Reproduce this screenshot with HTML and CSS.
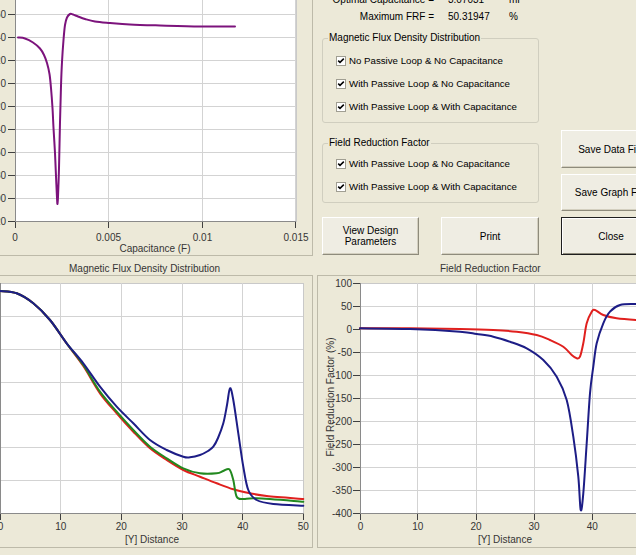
FILE: index.html
```html
<!DOCTYPE html>
<html lang="en">
<head>
    <meta charset="UTF-8">
    <title>Passive Loop Results</title>
    <link rel="stylesheet" href="styles.css">
</head>
<body>
    <div class="window">
        <!-- FRF vs capacitance -->
        <div class="panel panel-top">
            <svg class="chart" width="312" height="255" viewBox="0 0 312 255">
                <rect class="plot" x="15.5" y="-20" width="280.5" height="241.5"/>
                <g class="grid">
                    <line x1="15" y1="14.5" x2="296" y2="14.5"/>
                    <line x1="15" y1="37.5" x2="296" y2="37.5"/>
                    <line x1="15" y1="60.5" x2="296" y2="60.5"/>
                    <line x1="15" y1="83.5" x2="296" y2="83.5"/>
                    <line x1="15" y1="106.5" x2="296" y2="106.5"/>
                    <line x1="15" y1="129.5" x2="296" y2="129.5"/>
                    <line x1="15" y1="152.5" x2="296" y2="152.5"/>
                    <line x1="15" y1="175.5" x2="296" y2="175.5"/>
                    <line x1="15" y1="198.5" x2="296" y2="198.5"/>
                    <line x1="108.5" y1="-20" x2="108.5" y2="222"/>
                    <line x1="202.5" y1="-20" x2="202.5" y2="222"/>
                    <line x1="295.5" y1="-20" x2="295.5" y2="222"/>
                </g>
                <g class="axis">
                    <line x1="15.5" y1="-20" x2="15.5" y2="222"/>
                    <line x1="15" y1="221.5" x2="296" y2="221.5"/>
                </g>
                <g class="ticks">
                    <line x1="8" y1="14.5" x2="15" y2="14.5"/>
                    <line x1="8" y1="37.5" x2="15" y2="37.5"/>
                    <line x1="8" y1="60.5" x2="15" y2="60.5"/>
                    <line x1="8" y1="83.5" x2="15" y2="83.5"/>
                    <line x1="8" y1="106.5" x2="15" y2="106.5"/>
                    <line x1="8" y1="129.5" x2="15" y2="129.5"/>
                    <line x1="8" y1="152.5" x2="15" y2="152.5"/>
                    <line x1="8" y1="175.5" x2="15" y2="175.5"/>
                    <line x1="8" y1="198.5" x2="15" y2="198.5"/>
                    <line x1="8" y1="221.5" x2="15" y2="221.5"/>
                    <line x1="15.5" y1="222" x2="15.5" y2="228"/>
                    <line x1="108.5" y1="222" x2="108.5" y2="228"/>
                    <line x1="202.5" y1="222" x2="202.5" y2="228"/>
                    <line x1="295.5" y1="222" x2="295.5" y2="228"/>
                </g>
                <g class="labels-y">
                    <text x="6" y="18">60</text>
                    <text x="6" y="41">40</text>
                    <text x="6" y="64">20</text>
                    <text x="6" y="87">0</text>
                    <text x="6" y="110">-20</text>
                    <text x="6" y="133">-40</text>
                    <text x="6" y="156">-60</text>
                    <text x="6" y="179">-80</text>
                    <text x="6" y="202">-100</text>
                    <text x="6" y="225">-120</text>
                </g>
                <g class="labels-x">
                    <text x="15" y="241">0</text>
                    <text x="108.5" y="241">0.005</text>
                    <text x="202.5" y="241">0.01</text>
                    <text x="296" y="241">0.015</text>
                    <text x="155" y="252">Capacitance (F)</text>
                </g>
                <polyline class="line line-purple" points="18,37.5 25,38.5 33,42.5 40,48.5 44,55 47,63 49.5,74 51,88 52.5,108 53.5,128 55,153 56,176 57,198 57.5,204 58,197 59,168 60,122 61,86 62,62 63.5,40 65,25 67,17.5 70,14 73,14.5 78,16.5 85,19 95,21.5 110,23 130,24.5 160,25.5 200,26.5 235,26.5"/>
            </svg>
        </div>

        <!-- Results and options -->
        <div class="controls">
            <div class="controls-main">
                <div class="readout">
                    <span class="readout-label">Optimal Capacitance =</span>
                    <span>3.07031</span>
                    <span>mF</span>
                    <span class="readout-label">Maximum FRF =</span>
                    <span>50.31947</span>
                    <span>%</span>
                </div>

                <fieldset class="group group-flux">
                    <legend>Magnetic Flux Density Distribution</legend>
                    <label class="option"><span class="check"><svg width="8" height="8" viewBox="0 0 8 8"><path d="M1.2 3.6 L3 5.4 L6.8 1.6"/></svg></span>No Passive Loop &amp; No Capacitance</label>
                    <label class="option"><span class="check"><svg width="8" height="8" viewBox="0 0 8 8"><path d="M1.2 3.6 L3 5.4 L6.8 1.6"/></svg></span>With Passive Loop &amp; No Capacitance</label>
                    <label class="option"><span class="check"><svg width="8" height="8" viewBox="0 0 8 8"><path d="M1.2 3.6 L3 5.4 L6.8 1.6"/></svg></span>With Passive Loop &amp; With Capacitance</label>
                </fieldset>

                <fieldset class="group group-frf">
                    <legend>Field Reduction Factor</legend>
                    <label class="option"><span class="check"><svg width="8" height="8" viewBox="0 0 8 8"><path d="M1.2 3.6 L3 5.4 L6.8 1.6"/></svg></span>With Passive Loop &amp; No Capacitance</label>
                    <label class="option"><span class="check"><svg width="8" height="8" viewBox="0 0 8 8"><path d="M1.2 3.6 L3 5.4 L6.8 1.6"/></svg></span>With Passive Loop &amp; With Capacitance</label>
                </fieldset>

                <div class="button-row">
                    <button class="btn btn-params">View Design<br>Parameters</button>
                    <button class="btn btn-print">Print</button>
                </div>
            </div>

            <div class="controls-side">
                <button class="btn btn-save">Save Data File</button>
                <button class="btn btn-save btn-save-graph">Save Graph File</button>
                <button class="btn btn-close">Close</button>
            </div>
        </div>

        <div class="chart-title">Magnetic Flux Density Distribution</div>
        <div class="chart-title chart-title-right">Field Reduction Factor</div>

        <!-- Flux density along Y -->
        <div class="panel panel-bottom-left">
            <svg class="chart" width="312" height="271" viewBox="0 0 312 271">
                <g transform="translate(0,-276)">
                    <rect class="plot" x="-5" y="283.5" width="308.5" height="230"/>
                    <g class="grid">
                        <line x1="0" y1="316.5" x2="303" y2="316.5"/>
                        <line x1="0" y1="349.5" x2="303" y2="349.5"/>
                        <line x1="0" y1="382.5" x2="303" y2="382.5"/>
                        <line x1="0" y1="414.5" x2="303" y2="414.5"/>
                        <line x1="0" y1="447.5" x2="303" y2="447.5"/>
                        <line x1="0" y1="480.5" x2="303" y2="480.5"/>
                        <line x1="60.5" y1="283" x2="60.5" y2="513"/>
                        <line x1="121.5" y1="283" x2="121.5" y2="513"/>
                        <line x1="182.5" y1="283" x2="182.5" y2="513"/>
                        <line x1="242.5" y1="283" x2="242.5" y2="513"/>
                    </g>
                    <g class="axis">
                        <line x1="0.5" y1="283" x2="0.5" y2="514"/>
                        <line x1="0" y1="513.5" x2="304" y2="513.5"/>
                    </g>
                    <g class="ticks">
                        <line x1="0.5" y1="514" x2="0.5" y2="520"/>
                        <line x1="60.5" y1="514" x2="60.5" y2="520"/>
                        <line x1="121.5" y1="514" x2="121.5" y2="520"/>
                        <line x1="182.5" y1="514" x2="182.5" y2="520"/>
                        <line x1="242.5" y1="514" x2="242.5" y2="520"/>
                        <line x1="303.5" y1="514" x2="303.5" y2="520"/>
                    </g>
                    <g class="labels-x">
                        <text x="0.5" y="530">0</text>
                        <text x="60.7" y="530">10</text>
                        <text x="121.3" y="530">20</text>
                        <text x="182" y="530">30</text>
                        <text x="242.7" y="530">40</text>
                        <text x="303.3" y="530">50</text>
                        <text x="152" y="543">[Y] Distance</text>
                    </g>
                    <polyline class="line line-red" points="0,291 16.7,293.3 33.3,303.3 50,320 66.7,343.5 83.3,366 100,393.3 116.7,413.3 133.3,431.7 150,448.3 166.7,460 183.3,470 200,476.7 216.7,483.3 233.3,489.3 250,493.3 266.7,496 303.3,499"/>
                    <polyline class="line line-green" points="0,291 16.7,293.3 33.3,303.3 50,320 66.7,343.3 83.3,365 100,391.7 116.7,411.7 133.3,430 150,446.7 166.7,458.3 183.3,468.3 200,473.3 216.7,473.3 223.3,471 229.3,469.3 233.3,480 236.7,496.7 243.3,499 256.7,498.3 303.3,501.7"/>
                    <polyline class="line line-blue" points="0,291 16.7,293.3 33.3,303.3 50,320 66.7,343.3 83.3,363.3 100,386.7 116.7,406.7 133.3,423.3 150,440 166.7,450 183.3,456.7 190,457.3 200,455 208,451 213.3,446.7 218,438 223.3,423.3 227,405 230,388.3 233.3,400 238.3,433.3 243.3,466.7 248.3,490 256.7,500 273.3,504 303.3,505.7"/>
                </g>
            </svg>
        </div>

        <!-- Field reduction factor along Y -->
        <div class="panel panel-bottom-right">
            <svg class="chart" width="318" height="271" viewBox="0 0 318 271">
                <g transform="translate(-318,-276)">
                    <rect class="plot" x="360.5" y="283.5" width="320" height="230"/>
                    <g class="grid">
                        <line x1="360" y1="306.5" x2="680" y2="306.5"/>
                        <line x1="360" y1="329.5" x2="680" y2="329.5"/>
                        <line x1="360" y1="352.5" x2="680" y2="352.5"/>
                        <line x1="360" y1="375.5" x2="680" y2="375.5"/>
                        <line x1="360" y1="398.5" x2="680" y2="398.5"/>
                        <line x1="360" y1="421.5" x2="680" y2="421.5"/>
                        <line x1="360" y1="444.5" x2="680" y2="444.5"/>
                        <line x1="360" y1="467.5" x2="680" y2="467.5"/>
                        <line x1="360" y1="490.5" x2="680" y2="490.5"/>
                        <line x1="417.5" y1="283" x2="417.5" y2="513"/>
                        <line x1="476.5" y1="283" x2="476.5" y2="513"/>
                        <line x1="534.5" y1="283" x2="534.5" y2="513"/>
                        <line x1="592.5" y1="283" x2="592.5" y2="513"/>
                    </g>
                    <g class="axis">
                        <line x1="360.5" y1="283" x2="360.5" y2="514"/>
                        <line x1="360" y1="513.5" x2="680" y2="513.5"/>
                    </g>
                    <g class="ticks">
                        <line x1="353" y1="283.5" x2="360" y2="283.5"/>
                        <line x1="353" y1="306.5" x2="360" y2="306.5"/>
                        <line x1="353" y1="329.5" x2="360" y2="329.5"/>
                        <line x1="353" y1="352.5" x2="360" y2="352.5"/>
                        <line x1="353" y1="375.5" x2="360" y2="375.5"/>
                        <line x1="353" y1="398.5" x2="360" y2="398.5"/>
                        <line x1="353" y1="421.5" x2="360" y2="421.5"/>
                        <line x1="353" y1="444.5" x2="360" y2="444.5"/>
                        <line x1="353" y1="467.5" x2="360" y2="467.5"/>
                        <line x1="353" y1="490.5" x2="360" y2="490.5"/>
                        <line x1="353" y1="513.5" x2="360" y2="513.5"/>
                        <line x1="360.5" y1="514" x2="360.5" y2="520"/>
                        <line x1="417.5" y1="514" x2="417.5" y2="520"/>
                        <line x1="476.5" y1="514" x2="476.5" y2="520"/>
                        <line x1="534.5" y1="514" x2="534.5" y2="520"/>
                        <line x1="592.5" y1="514" x2="592.5" y2="520"/>
                    </g>
                    <g class="labels-y">
                        <text x="352" y="287">100</text>
                        <text x="352" y="310">50</text>
                        <text x="352" y="333">0</text>
                        <text x="352" y="356">-50</text>
                        <text x="352" y="379">-100</text>
                        <text x="352" y="402">-150</text>
                        <text x="352" y="425">-200</text>
                        <text x="352" y="448">-250</text>
                        <text x="352" y="471">-300</text>
                        <text x="352" y="494">-350</text>
                        <text x="352" y="517">-400</text>
                    </g>
                    <g class="labels-x">
                        <text x="360.5" y="530">0</text>
                        <text x="417.7" y="530">10</text>
                        <text x="476" y="530">20</text>
                        <text x="534" y="530">30</text>
                        <text x="592.3" y="530">40</text>
                        <text x="505" y="543">[Y] Distance</text>
                    </g>
                    <text class="axis-title" transform="translate(334,397) rotate(-90)">Field Reduction Factor (%)</text>
                    <polyline class="line line-red" points="360,328.3 410,328.3 460,329 493.3,330 516.7,331.7 536.7,335 550,340 563.3,346.7 571.7,355 576.7,358.3 580,356.7 583.3,343.3 586.7,323.3 591.7,311.7 595,310 603.3,315 616.7,318.3 636,320 660,321"/>
                    <polyline class="line line-blue" points="360,328.3 410,329 460,331.7 476.7,334 493.3,336.7 510,341.7 526.7,348.3 543.3,360 556.7,376.7 566.7,400 573.3,436.7 578.3,476.7 580.7,510 583.3,493.3 586.7,443.3 590,393.3 593.3,366.7 596.7,343.3 603.3,323.3 610,311.7 620,305 636,304 660,304"/>
                </g>
            </svg>
        </div>
    </div>

    <script>
        // turn the sampled points of each curve into a smooth path
        function smoothPath(points) {
            let d = 'M' + points[0][0] + ',' + points[0][1];
            for (let i = 0; i < points.length - 1; i++) {
                const p0 = points[i - 1] || points[i];
                const p1 = points[i];
                const p2 = points[i + 1];
                const p3 = points[i + 2] || p2;
                const c1x = p1[0] + (p2[0] - p0[0]) / 6;
                const c1y = p1[1] + (p2[1] - p0[1]) / 6;
                const c2x = p2[0] - (p3[0] - p1[0]) / 6;
                const c2y = p2[1] - (p3[1] - p1[1]) / 6;
                d += ` C${c1x.toFixed(2)},${c1y.toFixed(2)} ${c2x.toFixed(2)},${c2y.toFixed(2)} ${p2[0]},${p2[1]}`;
            }
            return d;
        }

        document.querySelectorAll('polyline.line').forEach(line => {
            const points = line.getAttribute('points').trim().split(/\s+/)
                .map(p => p.split(',').map(Number));
            const path = document.createElementNS('http://www.w3.org/2000/svg', 'path');
            path.setAttribute('d', smoothPath(points));
            path.setAttribute('class', line.getAttribute('class'));
            line.replaceWith(path);
        });
    </script>
</body>
</html>
```

FILE: styles.css
```css
body {
    margin: 0;
    width: 636px;
    height: 555px;
    overflow: hidden;
    background-color: #ece9d8;
    font-family: "Liberation Sans", Arial, sans-serif;
    font-size: 10px;
    color: #000;
}

.window {
    display: grid;
    grid-template-columns: 313px 323px;
    grid-template-rows: 256px 19px 273px;
}

/* Chart panels */
.panel {
    background-color: #ece9d8;
    border: 0 solid #bdbaa9;
    overflow: hidden;
}

.panel-top {
    border-right-width: 1px;
    border-bottom-width: 1px;
}

.panel-bottom-left {
    border-width: 1px 1px 1px 0;
}

.panel-bottom-right {
    border-width: 1px 0 1px 1px;
    margin-left: 4px;
}

.chart {
    display: block;
}

.chart .plot {
    fill: #fff;
    stroke: #c9c9c9;
    stroke-width: 1;
    shape-rendering: crispEdges;
}

.chart .grid line {
    stroke: #d3d3d3;
    stroke-width: 1;
    shape-rendering: crispEdges;
}

.chart .axis line {
    stroke: #8a8a8a;
    stroke-width: 1;
    shape-rendering: crispEdges;
}

.chart .ticks line {
    stroke: #404040;
    stroke-width: 1;
    shape-rendering: crispEdges;
}

.chart text {
    font-family: "Liberation Sans", Arial, sans-serif;
    font-size: 10px;
    fill: #353535;
}

.chart .labels-y text {
    text-anchor: end;
}

.chart .labels-x text,
.chart .axis-title {
    text-anchor: middle;
}

.chart .line {
    fill: none;
    stroke-width: 2;
    stroke-linejoin: round;
    stroke-linecap: round;
}

.line-purple { stroke: #7c137c; }
.line-red { stroke: #e0201e; }
.line-green { stroke: #22891f; }
.line-blue { stroke: #1d1d86; }

.chart-title {
    padding: 7px 0 0 69px;
    line-height: 12px;
    color: #353535;
    white-space: nowrap;
}

.chart-title-right {
    padding-left: 127px;
}

/* Controls */
.controls {
    display: flex;
    gap: 22px;
    padding-left: 9px;
    min-width: 0;
}

.controls-main {
    flex: none;
    width: 217px;
}

.controls-side {
    flex: none;
    width: 100px;
    display: flex;
    flex-direction: column;
    gap: 6px;
    padding-top: 130px;
}

.readout {
    display: grid;
    grid-template-columns: 112px 47px auto;
    column-gap: 14px;
    line-height: 17px;
    margin-top: -9px;
    white-space: nowrap;
}

.readout-label {
    text-align: right;
}

.group {
    margin: 7px 0 0;
    padding: 5px 0 4px 5px;
    border: 1px solid #d0cebf;
    border-radius: 3px;
    min-inline-size: 0;
}

.group legend {
    padding: 0 1px;
    line-height: 12px;
}

.group-frf {
    margin-top: 14px;
    padding-top: 3px;
}

.option {
    display: flex;
    align-items: center;
    gap: 3px;
    height: 23px;
    margin-left: 8px;
    font-size: 9.7px;
    white-space: nowrap;
}

.check {
    display: flex;
    align-items: center;
    justify-content: center;
    width: 8px;
    height: 8px;
    border: 1px solid #a09e92;
    background-color: #fff;
}

.check path {
    fill: none;
    stroke: #000;
    stroke-width: 1.5;
}

.btn {
    height: 38px;
    padding: 0;
    font-family: inherit;
    font-size: 10px;
    line-height: 11px;
    color: #000;
    background-color: #efede3;
    border: 1px solid;
    border-color: #fff #8e8b7c #8e8b7c #fff;
    box-shadow: inset -1px -1px 0 #d3cfbf;
    white-space: nowrap;
}

.button-row {
    display: flex;
    gap: 22px;
    margin-top: 14px;
}

.btn-params {
    width: 97px;
}

.btn-print {
    width: 98px;
}

.btn-save-graph {
    height: 37px;
}

.btn-close {
    border-color: #1e1e1e;
    box-shadow: inset 1px 1px 0 #fff, inset -1px -1px 0 #8e8b7c;
}
```
